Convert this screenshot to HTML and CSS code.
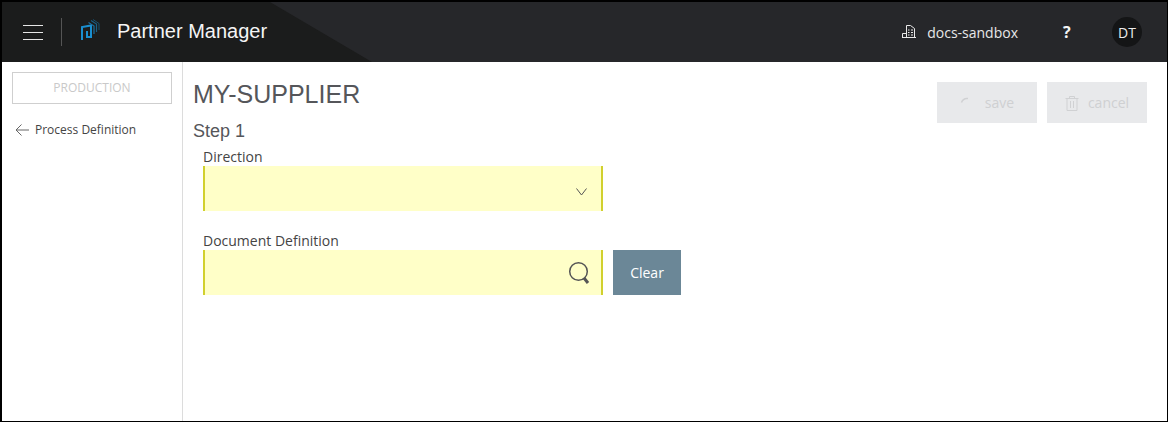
FILE: index.html
```html
<!DOCTYPE html>
<html lang="en">
<head>
<meta charset="utf-8">
<title>Partner Manager</title>
<link rel="stylesheet" href="styles.css">
</head>
<body>
<div class="frame">
  <header class="topbar">
    <div class="brand">
      <button class="menu-btn" aria-label="Menu"><span></span><span></span><span></span></button>
      <span class="divider"></span>
      <svg class="logo" width="20" height="22" viewBox="0 0 20 22" fill="none">
        <path d="M2 21V8L11 6.500V18H7V12" stroke="#1a8fd0" stroke-width="2"/>
        <path d="M8.500 3.500L14 7V15" stroke="#1c6f9f" stroke-width="1.200"/>
        <path d="M11 1.500L16.500 5V13" stroke="#1a5f85" stroke-width="1.200"/>
        <path d="M13 .5L19 4.500V11" stroke="#17506f" stroke-width="1"/>
      </svg>
      <span class="app-name">Partner Manager</span>
    </div>
    <div class="top-actions">
      <svg class="org-icon" width="14" height="16" viewBox="0 0 14 16" fill="none" stroke="#e8e8e8" stroke-width="1">
        <path d="M0 14.500H14M.5 14.500V10.500H4.500M4.500 14.500V2.500H8.500L12.500 5.500V14.500"/>
        <path d="M6 7H7.500M9 7H11M6 9.500H7.500M9 9.500H11M6 12H7.500M9 12H11" stroke-width="1.200"/>
      </svg>
      <span class="org-name">docs-sandbox</span>
      <span class="help">?</span>
      <span class="avatar">DT</span>
    </div>
  </header>
  <div class="body">
    <aside class="sidebar">
      <div class="env">PRODUCTION</div>
      <a class="back">
        <svg width="14" height="12" viewBox="0 0 14 12" fill="none" stroke="#666" stroke-width="1"><path d="M14 6H1M6.500 .5L1 6L6.500 11.500"/></svg>
        <span>Process Definition</span>
      </a>
    </aside>
    <main class="content">
      <div class="title-row">
        <h1>MY-SUPPLIER</h1>
        <div class="actions">
          <button class="act act-save">
            <svg width="14" height="14" viewBox="0 0 14 14" fill="none" stroke="#d0d1d3" stroke-width="1.500"><path d="M1.500 6.500A6 6 0 0 1 8 2.500"/></svg>
            <span>save</span>
          </button>
          <button class="act act-cancel">
            <svg width="14" height="16" viewBox="0 0 14 16" fill="none" stroke="#d0d1d3" stroke-width="1"><path d="M.5 3.500H13.500M4.500 3.500V1.500H9.500V3.500M2 3.500V15.500H12V3.500M5.500 6V13M8.500 6V13"/></svg>
            <span>cancel</span>
          </button>
        </div>
      </div>
      <h2>Step 1</h2>
      <div class="form">
        <div class="field">
          <label>Direction</label>
          <div class="input">
            <svg class="chev" width="11" height="8" viewBox="0 0 11 8" fill="none" stroke="#555" stroke-width="1"><path d="M.5 .5L5.500 7L10.500 .5"/></svg>
          </div>
        </div>
        <div class="field">
          <label>Document Definition</label>
          <div class="input-row">
            <div class="input">
              <svg class="search" width="22" height="24" viewBox="0 0 22 24" fill="none"><circle cx="10.500" cy="10.500" r="8.800" stroke="#555" stroke-width="1.500"/><path d="M16 17L20 22" stroke="#555" stroke-width="3"/></svg>
            </div>
            <button class="clear">Clear</button>
          </div>
        </div>
      </div>
    </main>
  </div>
</div>
</body>
</html>
```

FILE: styles.css
```css
* { box-sizing: border-box; }
html, body { margin: 0; padding: 0; height: 100%; }
body { font-family: "Open Sans", sans-serif; background: #fff; }
button { font-family: inherit; border: 0; padding: 0; }

.frame {
  width: 1168px;
  height: 422px;
  border: solid #000;
  border-width: 2px 1px 1px 2px;
  display: flex;
  flex-direction: column;
  overflow: hidden;
}

.topbar {
  height: 60px;
  flex: none;
  display: flex;
  justify-content: space-between;
  align-items: center;
  background: #26272a;
  position: relative;
  overflow: hidden;
}
.topbar::before {
  content: "";
  position: absolute;
  left: 0;
  top: 0;
  width: 370px;
  height: 60px;
  background: #1b1c1c;
  clip-path: polygon(0 0, 268px 0, 370px 60px, 0 60px);
}
.brand, .top-actions { display: flex; align-items: center; position: relative; }
.menu-btn {
  width: 20px;
  height: 15px;
  margin-left: 21px;
  background: none;
  display: flex;
  flex-direction: column;
  justify-content: space-between;
}
.menu-btn span { display: block; height: 1px; width: 20px; background: #e6e6e6; }
.divider { width: 1px; height: 28px; background: #555; margin-left: 18px; }
.logo { margin-left: 18px; margin-top: -4px; }
.app-name {
  font-family: "Liberation Sans", sans-serif;
  font-size: 20px;
  color: #f5f5f5;
  margin-left: 17px;
  margin-top: -2px;
}
.org-icon { margin-top: -2px; }
.org-name { font-size: 14px; font-weight: 500; color: #e8e8e8; margin-left: 11px; }
.help { font-size: 16px; font-weight: 700; color: #f5f5f5; margin-left: 45px; width: 10px; }
.avatar {
  width: 30px;
  height: 30px;
  border-radius: 50%;
  background: #141516;
  color: #ececec;
  font-size: 14px;
  font-weight: 500;
  display: flex;
  align-items: center;
  justify-content: center;
  margin-left: 39px;
  margin-right: 25px;
}

.body { flex: 1; display: flex; min-height: 0; }
.sidebar {
  width: 181px;
  flex: none;
  border-right: 1px solid #dcdcdc;
  padding: 10px 10px 0;
}
.env {
  width: 160px;
  height: 32px;
  border: 1px solid #cfcfcf;
  color: #c9c9c9;
  font-size: 12px;
  font-weight: 500;
  text-align: center;
  line-height: 30px;
}
.back {
  display: flex;
  align-items: center;
  gap: 6px;
  margin: 17px 0 0 3px;
  font-size: 12px;
  color: #444;
}

.content { flex: 1; padding: 16px 20px 0 10px; }
.title-row { display: flex; justify-content: space-between; align-items: flex-start; height: 44px; }
h1 {
  margin: 0;
  font-family: "Liberation Sans", sans-serif;
  font-size: 25px;
  font-weight: 400;
  line-height: 32px;
  color: #55565a;
}
.actions { display: flex; gap: 10px; margin-top: 4px; }
.act {
  width: 100px;
  height: 41px;
  background: #e8e9eb;
  color: #cfd0d2;
  font-size: 14px;
  font-weight: 500;
  display: flex;
  align-items: center;
  justify-content: center;
  gap: 11px;
}
.act-cancel { gap: 9px; }
h2 {
  margin: 0;
  font-family: "Liberation Sans", sans-serif;
  font-size: 18px;
  font-weight: 400;
  line-height: 18px;
  color: #55565a;
}
.form { padding: 0 0 0 10px; margin-top: 8px; }
.field { margin-bottom: 21px; }
.field label {
  display: block;
  font-size: 14px;
  line-height: 18px;
  color: #444;
}
.input {
  width: 400px;
  height: 45px;
  background: #ffffc8;
  border: solid #d1d02e;
  border-width: 0 2px;
  display: flex;
  align-items: center;
  justify-content: flex-end;
}
.chev { margin-right: 14px; margin-top: 7px; }
.search { margin-right: 11px; margin-top: 1px; }
.input-row { display: flex; gap: 10px; }
.clear {
  width: 68px;
  height: 45px;
  background: #6b8797;
  color: #fff;
  font-size: 14px;
  font-weight: 400;
}
```
